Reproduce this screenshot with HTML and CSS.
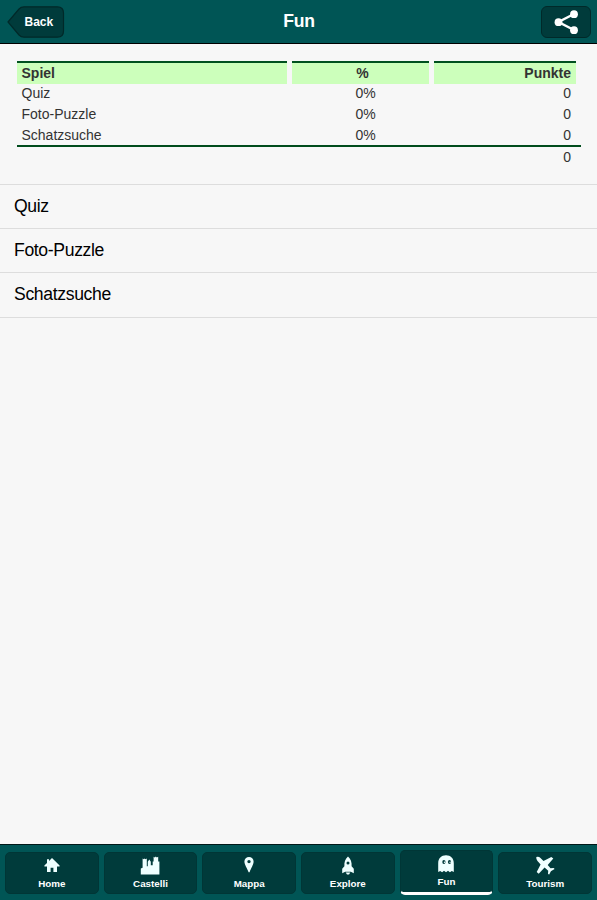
FILE: index.html
```html
<!DOCTYPE html>
<html lang="de">
<head>
<meta charset="utf-8">
<title>Fun</title>
<link rel="stylesheet" href="styles.css">
</head>
<body>
<header class="header">
  <a class="back">
    <svg class="back-shape" width="58" height="32" viewBox="0 0 58 32"><path d="M1 16 12 3Q14 .8 17 .8H50.5Q56.5.8 56.5 7V25Q56.5 31.2 50.5 31.2H17Q14 31.2 12 29Z"/></svg>
    <span class="back-label">Back</span>
  </a>
  <h1 class="title">Fun</h1>
  <a class="share">
    <svg width="26" height="26" viewBox="0 0 26 26"><path class="line" d="M21 5 5.5 13l15.5 8"/><circle cx="21" cy="5.2" r="3.9"/><circle cx="5.5" cy="13.2" r="3.9"/><circle cx="21" cy="21.2" r="3.9"/></svg>
  </a>
</header>
<main class="content">
  <section class="scores">
    <div class="row head"><span>Spiel</span><span>%</span><span>Punkte</span></div>
    <div class="row"><span>Quiz</span><span>0%</span><span>0</span></div>
    <div class="row"><span>Foto-Puzzle</span><span>0%</span><span>0</span></div>
    <div class="row"><span>Schatzsuche</span><span>0%</span><span>0</span></div>
    <div class="row total"><span></span><span></span><span>0</span></div>
  </section>
  <ul class="games">
    <li>Quiz</li>
    <li>Foto-Puzzle</li>
    <li>Schatzsuche</li>
  </ul>
</main>
<nav class="tabs">
  <a class="tab"><svg viewBox="0 0 20 20"><path d="M10 2 17.6 9.4v1.2H15V16h-3.6v-4.3H8.6V16H5v-5.4H2.4V9.4L5 6.9V3.2h2V5Z"/></svg><span>Home</span></a>
  <a class="tab"><svg viewBox="0 0 20 20"><path d="M.8 18.6v-6l1.8-.8V2.6l1.2.6.9-.8.8.8 1.3-.6v7.6h1V5.8L9.3 3.6l1.5 2.2v3.4h1.9V5.6h.9V.8l1.2.6 1-.8 1 .8 1.4-.6v4.8h1.2v13Z"/></svg><span>Castelli</span></a>
  <a class="tab"><svg viewBox="0 0 20 20"><path fill-rule="evenodd" d="M10 1a4.6 4.6 0 0 0-4.6 4.6C5.4 8.4 8.3 13 9.6 16.2h1c1.2-3.2 4-7.8 4-10.6A4.6 4.6 0 0 0 10 1Zm0 2.9a1.7 1.7 0 1 1 0 3.4 1.7 1.7 0 0 1 0-3.4Z"/></svg><span>Mappa</span></a>
  <a class="tab"><svg viewBox="0 0 20 20"><path fill-rule="evenodd" d="M10 .4C7.3 2.7 6 6.2 6.4 10.2L4.2 12.7v4.5l3-1.5h5.6l3 1.5v-4.5l-2.2-2.5c.4-4-.9-7.5-3.6-9.8Zm0 5a1.5 1.5 0 1 1 0 3 1.5 1.5 0 0 1 0-3Z"/><path d="M7.7 16.5h4.6L11 18.5H9Z"/></svg><span>Explore</span></a>
  <a class="tab active"><svg viewBox="0 0 20 20"><path d="M2.2 18V9.4C2.2 4.2 5.3 1.2 10 1.2s7.8 3 7.8 8.2V18l-2-1-1.9 1.2L12 16.7l-2 1.5-2-1.5-1.9 1.5L4.2 17Z"/><ellipse class="hole" cx="7.9" cy="8" rx="1.6" ry="2.1"/><ellipse class="hole" cx="13.5" cy="8" rx="1.6" ry="2.1"/><circle cx="8.5" cy="8.2" r=".7"/><circle cx="14.1" cy="8.2" r=".7"/></svg><span>Fun</span></a>
  <a class="tab"><svg viewBox="0 0 20 20"><path d="M1.3.9q2.5-.6 4.2 1l3 3 7.8-4 2 1.7-5.6 6.5 2.8 3.2 3.2-.4.9 1.1-3.7 2.2-1.7 3.4-1.2-.7.2-3.1L9.6 11.4l-5.9 6.4-2-1.7L5.6 8.4 2.5 5.1Q1 3.4 1.3.9Z"/></svg><span>Tourism</span></a>
</nav>
</body>
</html>
```
FILE: styles.css
```css
* { box-sizing: border-box; }
body {
  margin: 0;
  height: 900px;
  display: flex;
  flex-direction: column;
  background: #f7f7f7;
  font-family: "Liberation Sans", Arial, sans-serif;
  color: #333;
}
.header {
  height: 44px;
  flex: none;
  display: grid;
  grid-template-columns: 58px 1fr 58px;
  padding: 6px 6px 0 7px;
  align-items: start;
  background: #005555;
  border-bottom: 1px solid #000;
}
.back { display: grid; height: 32px; color: #fff; }
.back > * { grid-area: 1 / 1; }
.back-shape path { fill: #003b3b; stroke: #002929; stroke-width: 1.2; }
.back-label { padding-left: 17.5px; font: bold 12px/32px "Liberation Sans", Arial, sans-serif; }
.title {
  margin: 0;
  color: #fff;
  font-size: 17.6px;
  letter-spacing: -.3px;
  line-height: 31px;
  text-align: center;
}
.share {
  justify-self: end;
  width: 50px;
  height: 32px;
  display: flex;
  align-items: center;
  justify-content: center;
  border: 1px solid #002929;
  border-radius: 6px;
  background: #003b3b;
}
.share svg { fill: #fff; }
.share .line { fill: none; stroke: #fff; stroke-width: 2.5; }
.content { flex: 1; }
.scores { height: 140px; padding: 17px 16px 0 17px; font-size: 14px; }
.row {
  display: grid;
  grid-template-columns: 270px 137px 142px;
  column-gap: 5px;
  height: 20.7px;
  line-height: 20.7px;
}
.row span { padding: 0 5px 0 4.5px; }
.row span:nth-child(2) { text-align: center; padding-left: 15px; }
.row span:nth-child(3) { text-align: right; }
.head { height: 22.4px; font-weight: bold; }
.head span { border-top: 2px solid #00501f; background: #ccffbb; }
.head span:nth-child(2) { padding-left: 9px; }
.total { height: 22px; border-top: 2px solid #004c1c; }
.games { list-style: none; margin: 0; padding: 0; border-top: 1px solid #ddd; }
.games li {
  height: 44.2px;
  padding-left: 14px;
  border-bottom: 1px solid #ddd;
  color: #000;
  font-size: 17.6px;
  letter-spacing: -.35px;
  line-height: 43px;
}
.tabs {
  height: 56px;
  flex: none;
  display: grid;
  grid-template-columns: repeat(6, 1fr);
  gap: 5px;
  padding: 7px 5px 6px;
  background: #005555;
  border-top: 1px solid #001818;
}
.tab {
  height: 42px;
  display: flex;
  flex-direction: column;
  align-items: center;
  padding-top: 2.5px;
  border: 1px solid #003636;
  border-radius: 5px;
  background: #003b3b;
  color: #fff;
  font-size: 9.8px;
  font-weight: bold;
  line-height: 12px;
}
.tab svg { width: 20px; height: 20px; fill: #efffff; }
.tab svg .hole { fill: #003b3b; }
.tab span { margin-top: 2.5px; }
.active { height: 45px; margin-top: -2px; border-bottom: 3px solid #fff; }
```
